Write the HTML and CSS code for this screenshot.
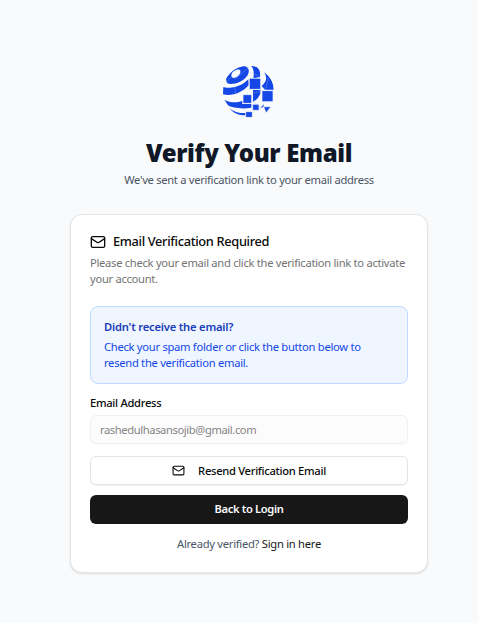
FILE: index.html
```html
<!DOCTYPE html>
<html lang="en">
<head>
<meta charset="utf-8">
<title>Verify Your Email</title>
<link rel="stylesheet" href="styles.css">
</head>
<body>
<main class="page">
  <header class="header">
    <svg class="logo" viewBox="24 27 159 162" aria-hidden="true">
      <defs><clipPath id="globe"><circle cx="103" cy="106" r="77"/></clipPath></defs>
      <g clip-path="url(#globe)">
        <g fill="#1447e6">
          <path fill-rule="evenodd" d="M40 82C32 70 36 51 56 38C73 26 98 27 103 38C109 52 96 70 78 77C65 83 50 86 40 82ZM53 62C58 73 82 58 79 44C74 34 47 48 53 62Z"/>
          <path d="M109 28C131 28 141 43 138 63L118 67C121 48 119 36 109 28Z"/>
          <path d="M28 93C57 101 84 89 103 70L104 88C86 109 52 123 27 115Z"/>
          <path d="M150 49C172 64 180 84 179 101L153 101L143 90C159 77 160 63 150 49Z"/>
          <path d="M31 131C51 142 69 140 85 134V144H112V155C88 160 53 156 42 148Z"/>
          <path d="M46 158C65 169 79 172 94 171V178C75 178 57 171 46 158Z"/>
          <path d="M117 102H139V113C134 124 126 133 117 137Z"/>
        </g>
      </g>
      <g fill="#1447e6" stroke="#f9fafb" stroke-width="2">
        <path d="M106 67H140V100H106ZM144 104H177V137H144ZM87 116H113V142H87ZM116 145H135V163H116ZM95 167H115V184H95Z"/>
        <path d="M149 152H171L156 171ZM136 158L150 143V153Z"/>
      </g>
      <path d="M38 77L53 63L65 67L101 37M108 49L136 60M65 112L62 92M164 65L154 101M113 113L144 104M116 137L143 155" fill="none" stroke="#9fb5f5" stroke-width="1"/>
    </svg>
    <h1 class="title"><span>Verify Your Email</span></h1>
    <p class="subtitle"><span>We've sent a verification link to your email address</span></p>
  </header>
  <section class="card">
    <h2 class="card-title">
      <svg class="icon" viewBox="0 0 24 24"><rect x="2" y="4" width="20" height="16" rx="2"/><path d="m22 7-8.99 5.73a2 2 0 0 1-2.02 0L2 7"/></svg>
      <span>Email Verification Required</span>
    </h2>
    <p class="description"><span>Please check your email and click the verification link to activate</span><br>your account.</p>
    <div class="notice">
      <h3 class="notice-title"><span>Didn't receive the email?</span></h3>
      <p class="notice-text"><span>Check your spam folder or click the button below to</span><br>resend the verification email.</p>
    </div>
    <label class="label" for="email"><span>Email Address</span></label>
    <input class="input" id="email" type="email" value="rashedulhasansojib@gmail.com" disabled>
    <button class="button outline" type="button">
      <svg class="icon small" viewBox="0 0 24 24"><rect x="2" y="4" width="20" height="16" rx="2"/><path d="m22 7-8.99 5.73a2 2 0 0 1-2.02 0L2 7"/></svg>
      <span>Resend Verification Email</span>
    </button>
    <button class="button primary" type="button"><span>Back to Login</span></button>
    <p class="footer"><span>Already verified? <a class="link" href="#">Sign in here</a></span></p>
  </section>
</main>
</body>
</html>
```
FILE: styles.css
```css
* { box-sizing: border-box; margin: 0; }
body {
  background: #f9fafb;
  font: 11.2px/16px "Noto Sans", "Open Sans", sans-serif;
  color: #0a0a0a;
}
.page { height: 623px; padding: 65px 50px 0 70px; }
.header { display: flex; flex-direction: column; align-items: center; }
.logo { width: 53px; height: 54px; margin-right: 1px; }
.title {
  margin-top: 19px;
  font-size: 24px;
  line-height: 29px;
  font-weight: 900;
  letter-spacing: -0.35px;
  color: #101828;
  white-space: nowrap;
}
.subtitle { margin-top: 5px; color: #4a5565; letter-spacing: -0.3px; white-space: nowrap; }
.card {
  width: 358px;
  height: 359px;
  margin-top: 26px;
  padding: 19px;
  background: #fff;
  border: 1px solid #e5e5e5;
  border-radius: 12px;
  box-shadow: 0 1px 2px rgba(0, 0, 0, .12);
}
.card-title {
  display: flex;
  align-items: center;
  gap: 7px;
  height: 16px;
  font-size: 12.8px;
  line-height: 16px;
  font-weight: 500;
  letter-spacing: -0.33px;
}
.card-title span { margin-top: -2px; }
.icon {
  width: 16px;
  height: 16px;
  flex: none;
  fill: none;
  stroke: currentColor;
  stroke-width: 2;
  stroke-linecap: round;
  stroke-linejoin: round;
}
.small { width: 13px; height: 13px; }
.description { margin-top: 5px; color: #737373; letter-spacing: -0.29px; white-space: nowrap; }
.notice {
  height: 78px;
  margin-top: 19px;
  padding: 12px 13px;
  background: #eff6ff;
  border: 1px solid #bedbff;
  border-radius: 8px;
}
.notice-title { font-size: 11.2px; font-weight: 600; color: #193cb8; letter-spacing: -0.2px; }
.notice-text { margin-top: 4px; color: #1447e6; letter-spacing: -0.28px; white-space: nowrap; }
.label { display: block; margin-top: 11px; font-weight: 500; letter-spacing: -0.3px; }
.input {
  display: block;
  width: 100%;
  height: 29px;
  margin-top: 4px;
  padding: 0 9px;
  font: inherit;
  letter-spacing: -0.4px;
  color: #858585;
  background: #fcfcfc;
  border: 1px solid #f1f1f1;
  border-radius: 6px;
  box-shadow: 0 1px 1px rgba(0, 0, 0, .025);
}
.button {
  display: flex;
  width: 100%;
  height: 29px;
  align-items: center;
  justify-content: center;
  font: inherit;
  font-weight: 500;
  letter-spacing: -0.3px;
  border-radius: 6px;
}
.outline {
  gap: 13px;
  margin-top: 12px;
  color: #0a0a0a;
  background: #fff;
  border: 1px solid #e5e5e5;
  box-shadow: 0 1px 1px rgba(0, 0, 0, .05);
}
.primary {
  margin-top: 10px;
  padding-bottom: 2px;
  color: #fafafa;
  background: #171717;
  border: 0;
  font-weight: 600;
  letter-spacing: -0.36px;
}
.footer { margin-top: 12px; text-align: center; color: #4a5565; letter-spacing: -0.27px; }
.link { color: #171717; text-decoration: none; }
```
